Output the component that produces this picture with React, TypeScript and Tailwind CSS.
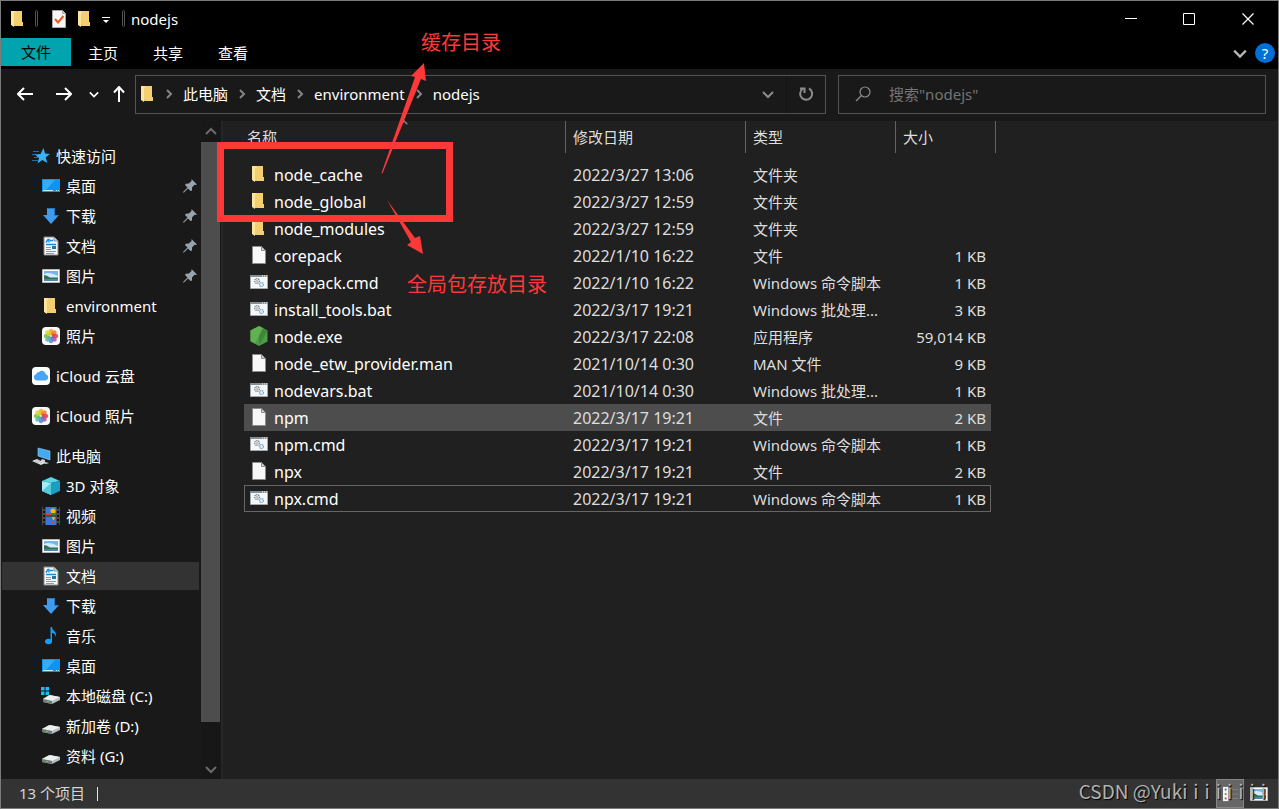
import type { ReactNode } from 'react';

type IconName =
  | 'star' | 'desktop' | 'download' | 'document' | 'picture' | 'folder' | 'photos' | 'icloud'
  | 'pc' | 'cube' | 'video' | 'music' | 'diskC' | 'disk' | 'file' | 'script' | 'node';

const PETALS = ['#f7a823', '#f2762e', '#e0393e', '#b04fa0', '#5b7fd0', '#4fb3c8', '#6cc04a', '#d6d22c'];

const ICONS: Record<IconName, ReactNode> = {
  star: (
    <>
      <path d="M1 4.500h6M0 7.500h4M2 10.500h4M0 13.500h6" stroke="#1373b0" />
      <path d="M11.500 1L13 6.500l5 .5-4.300 3.300L15.300 16l-5-3-4.800 3.500L7 11 2.800 7.500 8.500 7z" fill="#35b2f8" />
    </>
  ),
  desktop: (
    <>
      <path d="M0 2h18v13H0z" fill="#0c94f5" />
      <path d="M1 3h12L4 13H1z" fill="#35adff" />
      <path d="M1 13.500h10M14 13.500h1M16 13.500h1" stroke="#c9ebff" />
    </>
  ),
  download: (
    <>
      <path d="M5 1h8v7h4l-8 9-8-9h4z" fill="#3f9cec" />
      <path d="M5.500 1.500h7v7h3.500" fill="none" stroke="#2577c4" />
    </>
  ),
  document: (
    <>
      <path d="M2 0h10l4 4v14H2z" fill="#f7f7f7" stroke="#8b8b8b" />
      <path d="M12 0v4h4" fill="#d0d0d0" stroke="#8b8b8b" />
      <path d="M4 5.500l2-3h1v3M8 3.500h3M4 7.500h10" stroke="#1689d8" fill="none" strokeWidth="1.400" />
      <path d="M4 10.500h5M4 12.500h5M4 14.500h10M4 16.500h8" stroke="#8f9aa2" />
      <path d="M10 9h4v3h-4z" fill="#2576a8" />
    </>
  ),
  picture: (
    <>
      <path d="M.5 2.500h17v13H.5z" fill="#fff" stroke="#b9b9b9" />
      <path d="M2 4h14v10H2z" fill="#75b5ea" />
      <path d="M2 7q5-3 14 2v2H2z" fill="#d5ecfa" />
      <path d="M2 8q3 0 6 2.500h8V12H2z" fill="#376f55" />
      <path d="M2 12h14v2H2z" fill="#4b86ad" />
    </>
  ),
  folder: (
    <>
      <path d="M4 1h9v11h1v4H4z" fill="#f3cf70" />
      <path d="M2 1h3l2 2v11l-2 1v2l-3-2z" fill="#ffe59b" />
      <path d="M6 3v13" stroke="#e4b950" />
    </>
  ),
  photos: (
    <>
      <rect width="18" height="18" rx="4" fill="#fafafa" />
      {PETALS.map((color, i) => (
        <ellipse
          key={color}
          cx="9"
          cy="5"
          rx="2.300"
          ry="3.200"
          fill={color}
          fillOpacity=".85"
          transform={`rotate(${i * 45} 9 9)`}
        />
      ))}
    </>
  ),
  icloud: (
    <>
      <rect width="18" height="18" rx="4" fill="#fff" />
      <path d="M5 13.500a3.200 3.200 0 0 1-1-6.200 3.200 3.200 0 0 1 3-2.300 4 4 0 0 1 6.800 2.200A3.300 3.300 0 0 1 14 13.500z" fill="#46a5f5" />
    </>
  ),
  pc: (
    <>
      <path d="M6 1l12 3v9L6 9z" fill="#42a9f2" stroke="#9acdf0" strokeWidth=".6" />
      <path d="M10 12l3 1v2l4 1-3 1-6-2z" fill="#cbd3d9" />
      <path d="M0 14l5-2 8 4-4 2z" fill="#e1e6ea" />
      <path d="M3 14l4 2M5 13l5 3" stroke="#8e999f" strokeWidth=".6" />
    </>
  ),
  cube: (
    <>
      <path d="M9 0L0 4l9 2 9-2z" fill="#59d6e4" />
      <path d="M0 4l9 2v12l-9-4z" fill="#a5edf2" />
      <path d="M18 4L9 6v12l9-4z" fill="#199fc2" />
      <path d="M0 14l9-8v12z" fill="#54cbd9" />
    </>
  ),
  video: (
    <>
      <path d="M0 0h18v18H0z" fill="#4a4a4a" />
      <path d="M2 0v18M16 0v18" stroke="#161616" strokeWidth="2" strokeDasharray="2 2" />
      <path d="M4 0h10v8H4zM4 10h10v8H4z" fill="#3e78ce" />
      <circle cx="11" cy="4" r="2.500" fill="#e5bd25" />
      <path d="M4 6h5v2H4zM9 14h2v3H9z" fill="#d9452f" />
      <path d="M9 6h5v2H9z" fill="#32803c" />
      <path d="M10 10h3l-1 3h-1z" fill="#e5bd25" />
    </>
  ),
  music: (
    <>
      <ellipse cx="6.500" cy="14.500" rx="3.500" ry="2.800" fill="#10a0f8" />
      <path d="M8.500 0h1.500c0 4 5 4 4 10-1-3-2-4-4-4v9H8.500z" fill="#10a0f8" />
    </>
  ),
  diskC: (
    <>
      <path d="M1 12l6-4 11 2v3l-8 4-9-2z" fill="#b9bdc0" />
      <path d="M1 12l7-4 10 2-8 4z" fill="#eceef0" />
      <path d="M1 12l9 2v3l-9-2z" fill="#72777a" />
      <path d="M5 14.500h2" stroke="#42e052" />
      <path d="M-1 0h3.500v3.500H-1zM3.500 0H7v3.500H3.500zM-1 4.500h3.500V8H-1zM3.500 4.500H7V8H3.500z" fill="#16bdf2" />
    </>
  ),
  disk: (
    <>
      <path d="M0 12l7-4 11 2v3l-8 4-10-2z" fill="#b9bdc0" />
      <path d="M0 12l8-4 10 2-8 4z" fill="#eceef0" />
      <path d="M0 12l10 2v3L0 15z" fill="#72777a" />
      <path d="M4 14.500h2" stroke="#42e052" />
    </>
  ),
  file: (
    <>
      <path d="M2.500.5h9l4 4v13h-13z" fill="#f8f8f8" stroke="#8c8c8c" />
      <path d="M11.500.5v4h4z" fill="#d0d0d0" stroke="#8c8c8c" />
    </>
  ),
  script: (
    <>
      <path d="M.5 2.500h17v13H.5z" fill="#f5f7f8" stroke="#a3a9ad" />
      <path d="M0 3h18" stroke="#858d92" strokeWidth="2" />
      <path d="M12 3h1M14 3h1M16 3h1" stroke="#fff" />
      <circle cx="7" cy="8" r="2.300" fill="none" stroke="#7e868a" strokeWidth="1.400" strokeDasharray="1.200 .6" />
      <circle cx="7" cy="8" r=".8" fill="#7e868a" />
      <circle cx="11.500" cy="11.500" r="2" fill="#e0eef8" stroke="#6f9fc4" strokeWidth="1.200" strokeDasharray="1.200 .6" />
    </>
  ),
  node: (
    <>
      <path d="M9-1l8.500 4.500v11L9 19 .5 14.500v-11z" fill="#4d9e45" />
      <path d="M9-1l8.500 4.500L9 19z" fill="#3f873c" />
      <path d="M.5 3.500L9-1l4 2-8 15-4.500-2z" fill="#62b052" />
    </>
  ),
};

function Icon({ name }: { name: IconName }) {
  return (
    <svg viewBox="0 0 18 18" className="size-[18px] shrink-0 overflow-visible" aria-hidden="true">
      {ICONS[name]}
    </svg>
  );
}

function Chevron({ dir, className }: { dir: 'up' | 'down' | 'right'; className?: string }) {
  const d = { up: 'M1 8l5-5 5 5', down: 'M1 4l5 5 5-5', right: 'M4 2l4 4-4 4' }[dir];
  return (
    <svg viewBox="0 0 12 12" className={`shrink-0 ${className ?? 'size-3'}`} fill="none" stroke="currentColor" strokeWidth="2" aria-hidden="true">
      <path d={d} />
    </svg>
  );
}

function Pin() {
  return (
    <svg viewBox="0 0 14 14" className="ml-auto size-3.5" aria-hidden="true">
      <path d="M8.500 0L14 5.500l-1.500.5-1-.3L9 8.500v3L7.500 12 5 9.500 1 13.500H0V13l4.500-4.500L2 6l.8-1.200 3-.3L8.500 2z" fill="#97a3ad" />
    </svg>
  );
}

interface TreeItem {
  icon: IconName;
  label: string;
  root?: boolean;
  spaced?: boolean;
  pinned?: boolean;
  active?: boolean;
}

const TREE: TreeItem[] = [
  { icon: 'star', label: '快速访问', root: true },
  { icon: 'desktop', label: '桌面', pinned: true },
  { icon: 'download', label: '下载', pinned: true },
  { icon: 'document', label: '文档', pinned: true },
  { icon: 'picture', label: '图片', pinned: true },
  { icon: 'folder', label: 'environment' },
  { icon: 'photos', label: '照片' },
  { icon: 'icloud', label: 'iCloud 云盘', root: true, spaced: true },
  { icon: 'photos', label: 'iCloud 照片', root: true, spaced: true },
  { icon: 'pc', label: '此电脑', root: true, spaced: true },
  { icon: 'cube', label: '3D 对象' },
  { icon: 'video', label: '视频' },
  { icon: 'picture', label: '图片' },
  { icon: 'document', label: '文档', active: true },
  { icon: 'download', label: '下载' },
  { icon: 'music', label: '音乐' },
  { icon: 'desktop', label: '桌面' },
  { icon: 'diskC', label: '本地磁盘 (C:)' },
  { icon: 'disk', label: '新加卷 (D:)' },
  { icon: 'disk', label: '资料 (G:)' },
];

interface FileRow {
  icon: IconName;
  name: string;
  date: string;
  type: string;
  size?: string;
  state?: 'hover' | 'focus';
}

const FILES: FileRow[] = [
  { icon: 'folder', name: 'node_cache', date: '2022/3/27 13:06', type: '文件夹' },
  { icon: 'folder', name: 'node_global', date: '2022/3/27 12:59', type: '文件夹' },
  { icon: 'folder', name: 'node_modules', date: '2022/3/27 12:59', type: '文件夹' },
  { icon: 'file', name: 'corepack', date: '2022/1/10 16:22', type: '文件', size: '1 KB' },
  { icon: 'script', name: 'corepack.cmd', date: '2022/1/10 16:22', type: 'Windows 命令脚本', size: '1 KB' },
  { icon: 'script', name: 'install_tools.bat', date: '2022/3/17 19:21', type: 'Windows 批处理...', size: '3 KB' },
  { icon: 'node', name: 'node.exe', date: '2022/3/17 22:08', type: '应用程序', size: '59,014 KB' },
  { icon: 'file', name: 'node_etw_provider.man', date: '2021/10/14 0:30', type: 'MAN 文件', size: '9 KB' },
  { icon: 'script', name: 'nodevars.bat', date: '2021/10/14 0:30', type: 'Windows 批处理...', size: '1 KB' },
  { icon: 'file', name: 'npm', date: '2022/3/17 19:21', type: '文件', size: '2 KB', state: 'hover' },
  { icon: 'script', name: 'npm.cmd', date: '2022/3/17 19:21', type: 'Windows 命令脚本', size: '1 KB' },
  { icon: 'file', name: 'npx', date: '2022/3/17 19:21', type: '文件', size: '2 KB' },
  { icon: 'script', name: 'npx.cmd', date: '2022/3/17 19:21', type: 'Windows 命令脚本', size: '1 KB', state: 'focus' },
];

const CRUMBS = ['此电脑', '文档', 'environment', 'nodejs'];

function TitleBar() {
  return (
    <header className="flex h-[37px] items-center bg-black pl-2">
      <div className="flex items-center pb-0.5">
        <Icon name="folder" />
        <span className="ml-2 h-[17px] w-[3px] rounded-sm border border-[#555]" />
        <button aria-label="属性" className="ml-3.5">
          <svg viewBox="0 0 14 18" className="h-[18px] w-3.5" aria-hidden="true">
            <path d="M.5.5h10l3 3v14H.5z" fill="#f6f6f6" stroke="#a8a8a8" />
            <path d="M10.500.5v3h3" fill="#ccc" stroke="#a8a8a8" />
            <path d="M3 9l3 3.500L11.500 6" fill="none" stroke="#ee5a24" strokeWidth="2" />
          </svg>
        </button>
        <button aria-label="新建文件夹" className="ml-2.5">
          <Icon name="folder" />
        </button>
        <button aria-label="自定义快速访问工具栏" className="ml-2 mt-1">
          <svg viewBox="0 0 8 8" className="size-2" aria-hidden="true">
            <path d="M0 .5h8" stroke="#fff" />
            <path d="M1 3h6L4 6z" fill="#fff" />
          </svg>
        </button>
        <span className="ml-3 h-[17px] w-[3px] rounded-sm border border-[#555]" />
        <h1 className="ml-1.5 text-[15px] text-white">nodejs</h1>
      </div>
      <div className="ml-auto flex self-stretch pb-0.5 text-white">
        <button aria-label="最小化" className="flex w-[58px] items-center justify-center">
          <svg viewBox="0 0 12 12" className="size-3" stroke="currentColor"><path d="M0 5.500h12" /></svg>
        </button>
        <button aria-label="最大化" className="flex w-[58px] items-center justify-center">
          <svg viewBox="0 0 12 12" className="size-3" fill="none" stroke="currentColor"><path d="M.5.5h11v11H.5z" /></svg>
        </button>
        <button aria-label="关闭" className="flex w-[60px] items-center justify-center">
          <svg viewBox="0 0 12 12" className="size-3" stroke="currentColor" strokeWidth="1.200"><path d="M.5.5l11 11M11.500.5l-11 11" /></svg>
        </button>
      </div>
    </header>
  );
}

function Ribbon() {
  return (
    <nav className="flex h-[31px] items-center bg-black pb-0.5 text-white">
      <button className="h-7 w-[70px] self-start bg-[#00a4ae] text-black">文件</button>
      <div className="ml-[17px] flex gap-[35px]">
        <button>主页</button>
        <button>共享</button>
        <button>查看</button>
      </div>
      <button aria-label="展开功能区" className="ml-auto text-[#b5b5b5]">
        <Chevron dir="down" className="size-3.5" />
      </button>
      <button aria-label="帮助" className="ml-2 mr-[3px] flex size-5 items-center justify-center rounded-full bg-[#006fd6] text-white">
        ?
      </button>
    </nav>
  );
}

function AddressBar() {
  return (
    <div className="flex h-[52px] items-center bg-[#191919] pb-0.5 pl-4 pr-3 text-white">
      <button aria-label="后退">
        <svg viewBox="0 0 16 14" className="h-3.5 w-4" fill="none" stroke="currentColor" strokeWidth="2"><path d="M1 7h15M7 1L1 7l6 6" /></svg>
      </button>
      <button aria-label="前进" className="ml-[23px]">
        <svg viewBox="0 0 16 14" className="h-3.5 w-4" fill="none" stroke="currentColor" strokeWidth="2"><path d="M15 7H0M9 1l6 6-6 6" /></svg>
      </button>
      <button aria-label="最近浏览的位置" className="ml-[17px]">
        <Chevron dir="down" className="size-2.5" />
      </button>
      <button aria-label="上移" className="ml-[14px]">
        <svg viewBox="0 0 12 16" className="h-4 w-3" fill="none" stroke="currentColor" strokeWidth="2"><path d="M6 16V1M1 6.500L6 1l5 5.500" /></svg>
      </button>
      <div className="ml-[10px] flex h-[39px] min-w-0 flex-1 items-center border border-[#535353] pl-[3px]">
        <Icon name="folder" />
        <ol className="ml-1.5 flex items-center gap-2">
          {CRUMBS.map((crumb) => (
            <li key={crumb} className="flex items-center gap-2">
              <Chevron dir="right" className="size-3 text-[#858585]" />
              <a href="#">{crumb}</a>
            </li>
          ))}
        </ol>
        <button aria-label="上一个位置" className="ml-auto mr-3 text-[#8c8c8c]">
          <Chevron dir="down" />
        </button>
        <button aria-label="刷新" className="flex w-[39px] items-center justify-center self-stretch border-l border-[#131313] text-[#8c8c8c]">
          <svg viewBox="0 0 16 16" className="size-4" fill="none" stroke="currentColor" strokeWidth="2">
            <path d="M11 2.500A6 6 0 1 1 4.500 3M2 2.500h4.500V7" />
          </svg>
        </button>
      </div>
      <label className="ml-3 flex h-[39px] w-[428px] items-center border border-[#535353] pl-4">
        <svg viewBox="0 0 16 16" className="size-4 text-[#8c8c8c]" fill="none" stroke="currentColor" strokeWidth="1.200" aria-hidden="true">
          <circle cx="10" cy="6" r="5" />
          <path d="M6.500 9.500L1 15" />
        </svg>
        <input
          type="text"
          aria-label="搜索"
          placeholder={'搜索"nodejs"'}
          className="ml-[18px] min-w-0 flex-1 bg-transparent outline-none placeholder:text-[#747474]"
        />
      </label>
    </div>
  );
}

function Sidebar() {
  return (
    <aside className="flex w-[222px] shrink-0 border-r-2 border-[#262626] bg-[#191919]">
      <ul className="flex w-[200px] flex-col gap-0.5 pt-[21px] pr-0.5 text-white">
        {TREE.map((item, i) => (
          <li key={i} className={item.spaced ? 'mt-2.5' : ''}>
            <a
              href="#"
              className={`ml-px flex h-7 items-center gap-1.5 pr-0.5 ${item.root ? 'pl-[30px]' : 'pl-10'} ${item.active ? 'bg-[#333]' : ''}`}
            >
              <Icon name={item.icon} />
              {item.label}
              {item.pinned && <Pin />}
            </a>
          </li>
        ))}
      </ul>
      <div className="flex w-[19px] flex-col items-center bg-[#171717] text-[#6b6b6b]">
        <div className="flex h-[21px] items-center"><Chevron dir="up" /></div>
        <div className="h-[580px] w-full bg-[#4d4d4d]" />
        <div className="mt-auto flex h-[21px] items-center"><Chevron dir="down" /></div>
      </div>
    </aside>
  );
}

const ROW_STATE = {
  hover: '[&>td:not(:last-child)]:bg-[#4d4d4d]',
  focus:
    '[&>td:not(:last-child)]:border-y [&>td:first-child]:border-l [&>td:first-child]:pl-[5px] [&>td:nth-child(4)]:border-r [&>td:nth-child(4)]:pr-1 [&>td]:border-[#666]',
};

function FileTable() {
  return (
    <main className="min-w-0 flex-1 bg-[#202020] pl-[21px] text-[#dedede]">
      <table className="w-[752px] table-fixed border-separate border-spacing-0 text-left">
        <colgroup>
          <col className="w-[322px]" />
          <col className="w-[180px]" />
          <col className="w-[150px]" />
          <col className="w-[95px]" />
          <col className="w-[5px]" />
        </colgroup>
        <thead>
          <tr className="h-10 align-top">
            <th className="relative p-0 font-normal">
              <Chevron dir="up" className="absolute -top-0.5 left-[156px] size-2 text-[#858585]" />
              <div className="flex h-8 items-center border-r border-[#636363] pl-[3px]">名称</div>
            </th>
            <th className="p-0 font-normal">
              <div className="flex h-8 items-center border-r border-[#636363] pl-[7px]">修改日期</div>
            </th>
            <th className="p-0 font-normal">
              <div className="flex h-8 items-center border-r border-[#636363] pl-[7px]">类型</div>
            </th>
            <th colSpan={2} className="p-0 font-normal">
              <div className="flex h-8 items-center border-r border-[#636363] pl-[7px]">大小</div>
            </th>
          </tr>
        </thead>
        <tbody>
          {FILES.map((file) => (
            <tr key={file.name} className={`h-[27px] leading-5 ${file.state ? ROW_STATE[file.state] : ''}`}>
              <td className="p-0 pl-1.5 text-[16px] text-white">
                <span className="flex items-start gap-1.5">
                  <Icon name={file.icon} />
                  {file.name}
                </span>
              </td>
              <td className="p-0 pl-[7px] text-[16px]">{file.date}</td>
              <td className="p-0 pl-[7px] whitespace-nowrap">{file.type}</td>
              <td className="p-0 pr-[5px] text-right whitespace-nowrap">{file.size}</td>
              <td className="p-0" />
            </tr>
          ))}
        </tbody>
      </table>
    </main>
  );
}

function StatusBar() {
  return (
    <footer className="relative flex h-[29px] items-center bg-[#333] pl-[18px] text-[#d5d5d5]">
      <span className="pb-0.5">13 个项目</span>
      <span className="ml-3 h-3.5 w-px bg-[#e5e5e5]" />
      <button aria-label="详细信息" className="ml-auto flex h-full w-7 items-center border border-[#868686] bg-[#666] pl-1.5">
        <svg viewBox="0 0 18 18" className="size-4" aria-hidden="true">
          <path d="M0 1h6v16H0z" fill="#f5f5f5" />
          <path d="M2 3h2v2H2z" fill="#2c6da3" />
          <path d="M2 8h2v2H2z" fill="#8a8030" />
          <path d="M2 13h2v2H2z" fill="#c23b22" />
          <path d="M8 4h9M8 9h9M8 14h9" stroke="#858585" />
        </svg>
      </button>
      <button aria-label="大图标" className="ml-1.5 mr-2.5">
        <Icon name="picture" />
      </button>
      <span className="pointer-events-none absolute right-3 top-0 flex gap-1.5 font-['Noto_Sans_CJK_SC',sans-serif] text-[19px] leading-6 text-[#b2b2b2] [text-shadow:1px_1px_1px_#000]">
        <span>CSDN @Yuki</span>
        {Array.from({ length: 7 }, (_, i) => (
          <span key={i}>i</span>
        ))}
      </span>
    </footer>
  );
}

// Red markup drawn over the window
function Annotations() {
  return (
    <div className="pointer-events-none absolute inset-0 text-[20px] leading-6 text-[#fd3838]">
      <div className="absolute left-[216px] top-[141px] h-20 w-[236px] border-[7px] border-[#fd3838]" />
      <svg viewBox="0 0 60 200" className="absolute left-[374px] top-[59px] h-[200px] w-[60px]" fill="currentColor" aria-hidden="true">
        <path d="M6.500 113L40 17l-4-1L49 3l2 18-5-2L7.500 113.500z" />
        <path d="M12 140l24 42-4 3 16 9-3-18-5 2z" />
      </svg>
      <span className="absolute left-[420px] top-[30px]">缓存目录</span>
      <span className="absolute left-[406px] top-[272px]">全局包存放目录</span>
    </div>
  );
}

export default function App() {
  return (
    <div className="relative flex min-h-screen flex-col border border-[#7b7b7b] bg-[#202020] font-['Noto_Sans','Noto_Sans_CJK_SC',sans-serif] text-[15px] leading-5">
      <TitleBar />
      <Ribbon />
      <AddressBar />
      <div className="flex flex-1">
        <Sidebar />
        <FileTable />
      </div>
      <StatusBar />
      <Annotations />
    </div>
  );
}
